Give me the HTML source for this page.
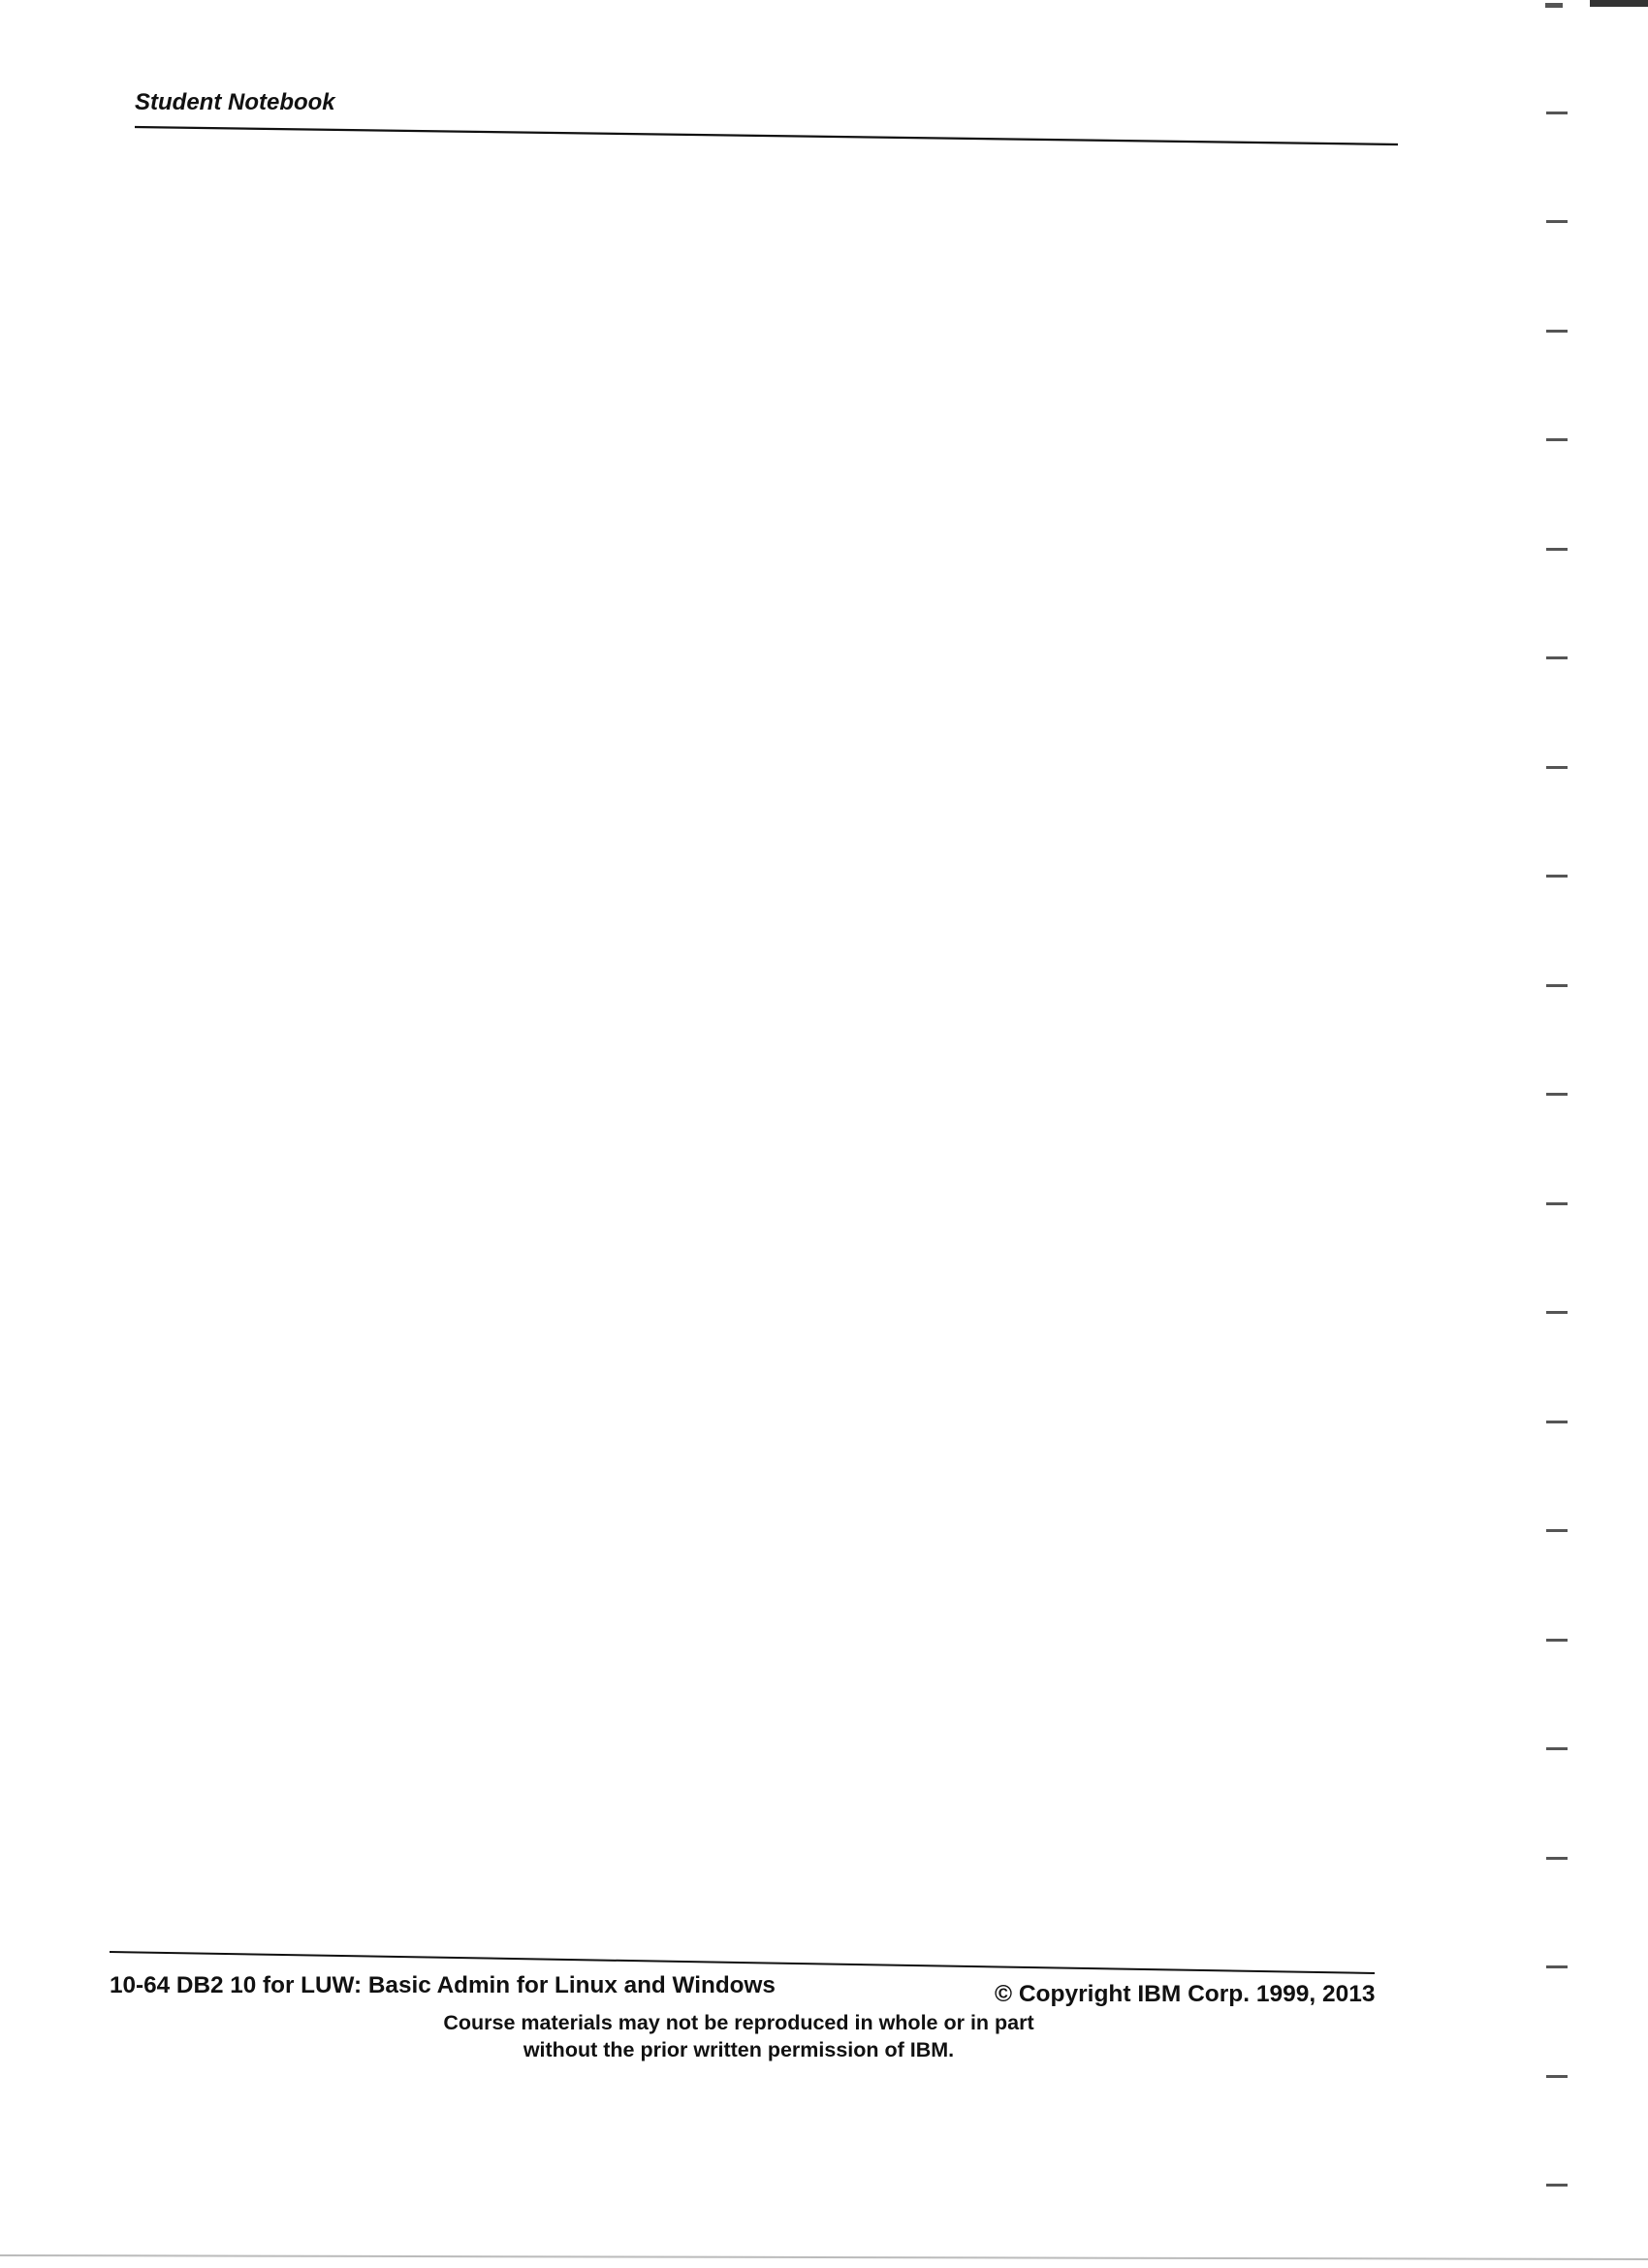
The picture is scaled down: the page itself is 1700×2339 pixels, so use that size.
<!DOCTYPE html>
<html><head><style>
body{margin:0;width:1700px;height:2339px;background:#fff;position:relative;overflow:hidden;font-family:"Liberation Sans",sans-serif;}
.t{position:absolute;white-space:nowrap;color:#111;}
.tick{position:absolute;left:1595px;width:22px;height:3px;background:#555;}
</style></head><body>
<div class="t" style="left:139px;top:92px;font-size:24px;font-weight:bold;font-style:italic;">Student Notebook</div>
<svg style="position:absolute;left:0;top:0" width="1700" height="2339">
<line x1="139" y1="131" x2="1442" y2="149" stroke="#111" stroke-width="2.2"/>
<line x1="113" y1="2013" x2="1418" y2="2035" stroke="#111" stroke-width="2"/>
<line x1="0" y1="2326" x2="1700" y2="2330" stroke="#bbb" stroke-width="2"/>
<rect x="1640" y="0" width="60" height="7" fill="#333"/>
<rect x="1594" y="3" width="18" height="5" fill="#555"/>
</svg>
<div class="t" style="left:113px;top:2034px;font-size:24.3px;font-weight:bold;">10-64 DB2 10 for LUW: Basic Admin for Linux and Windows</div>
<div class="t" style="left:1026px;top:2043px;font-size:24.5px;font-weight:bold;">© Copyright IBM Corp. 1999, 2013</div>
<div class="t" style="left:412px;top:2072px;width:700px;text-align:center;font-size:21.5px;font-weight:bold;line-height:28px;">Course materials may not be reproduced in whole or in part<br>without the prior written permission of IBM.</div>
<div class="tick" style="top:115px"></div><div class="tick" style="top:227px"></div><div class="tick" style="top:340px"></div><div class="tick" style="top:452px"></div><div class="tick" style="top:565px"></div><div class="tick" style="top:677px"></div><div class="tick" style="top:790px"></div><div class="tick" style="top:902px"></div><div class="tick" style="top:1015px"></div><div class="tick" style="top:1127px"></div><div class="tick" style="top:1240px"></div><div class="tick" style="top:1352px"></div><div class="tick" style="top:1465px"></div><div class="tick" style="top:1577px"></div><div class="tick" style="top:1690px"></div><div class="tick" style="top:1802px"></div><div class="tick" style="top:1915px"></div><div class="tick" style="top:2027px"></div><div class="tick" style="top:2140px"></div><div class="tick" style="top:2252px"></div>
</body></html>
